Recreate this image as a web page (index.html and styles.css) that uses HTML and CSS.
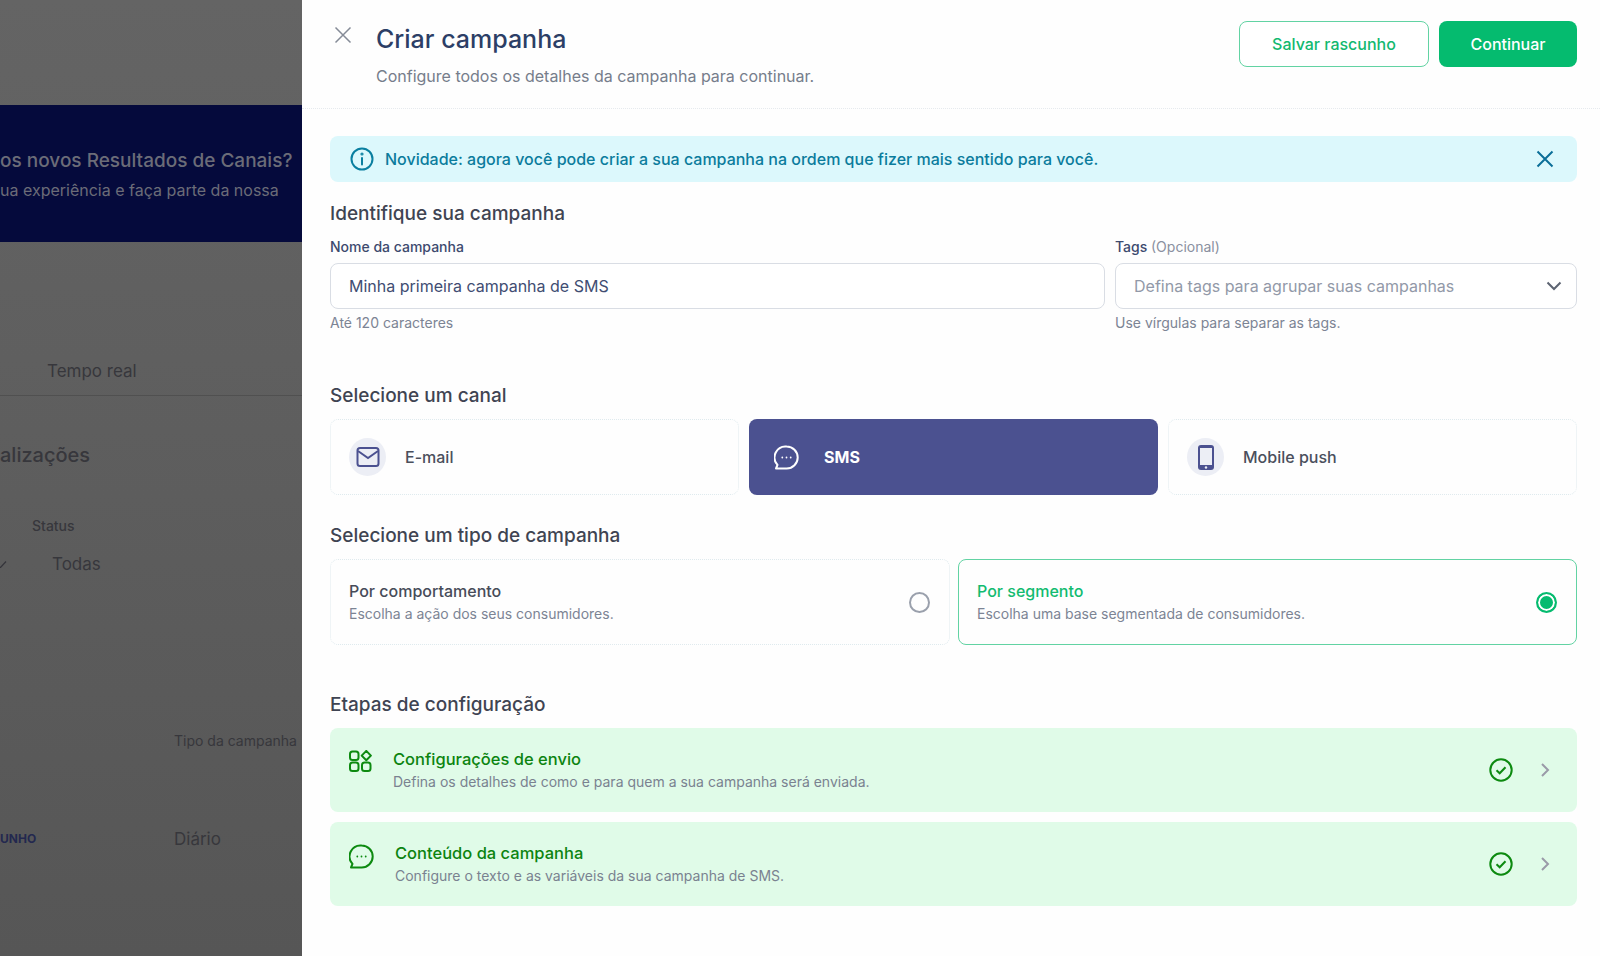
FILE: index.html
```html
<!DOCTYPE html>
<html lang="pt-BR">
<head>
<meta charset="utf-8">
<title>Criar campanha</title>
<link rel="stylesheet" href="styles.css">
</head>
<body>
<div class="app">
  <aside class="backdrop">
    <div class="bd-top"></div>
    <div class="bd-banner">
      <p class="bd-banner-title">os novos Resultados de Canais?</p>
      <p class="bd-banner-sub">ua experiência e faça parte da nossa</p>
    </div>
    <div class="bd-tabs"><span>Tempo real</span></div>
    <h2 class="bd-heading">alizações</h2>
    <div class="bd-status">Status</div>
    <div class="bd-filter">
      <svg class="bd-check" width="8" height="8" viewBox="0 0 8 8"><path d="M0 6.5 1.5 7.5 7 1.5" fill="none" stroke="#35353b" stroke-width="1.2"/></svg>
      <span>Todas</span>
    </div>
    <div class="bd-spacer"></div>
    <div class="bd-th">Tipo da campanha</div>
    <div class="bd-row"><b>UNHO</b><span>Diário</span></div>
  </aside>

  <main class="panel">
    <header class="head">
      <button class="close" aria-label="Fechar">
        <svg width="20" height="20" viewBox="0 0 20 20"><path d="M2.5 2.5 17.5 17.5M17.5 2.5 2.5 17.5" fill="none" stroke="#858b97" stroke-width="1.5"/></svg>
      </button>
      <div class="head-text">
        <h1>Criar campanha</h1>
        <p>Configure todos os detalhes da campanha para continuar.</p>
      </div>
      <div class="head-actions">
        <button class="btn btn-outline">Salvar rascunho</button>
        <button class="btn btn-solid">Continuar</button>
      </div>
    </header>

    <div class="body">
      <div class="alert">
        <svg width="24" height="24" viewBox="0 0 24 24" fill="none" stroke="#0a7fa0" stroke-width="2"><circle cx="12" cy="12" r="10.5"/><path d="M12 11v6.5" stroke-linecap="round"/><circle cx="12" cy="7" r=".6"/></svg>
        <span class="alert-text">Novidade: agora você pode criar a sua campanha na ordem que fizer mais sentido para você.</span>
        <svg class="alert-x" width="18" height="18" viewBox="0 0 18 18"><path d="M1.5 1.5 16.5 16.5M16.5 1.5 1.5 16.5" fill="none" stroke="#0b6f98" stroke-width="2"/></svg>
      </div>

      <section class="sec sec-id">
        <h3>Identifique sua campanha</h3>
        <div class="fields">
          <div class="field">
            <label>Nome da campanha</label>
            <div class="input value">Minha primeira campanha de SMS</div>
            <small>Até 120 caracteres</small>
          </div>
          <div class="field">
            <label>Tags <em>(Opcional)</em></label>
            <div class="input placeholder">
              <span>Defina tags para agrupar suas campanhas</span>
              <svg width="16" height="10" viewBox="0 0 16 10"><path d="M1.5 1.5 8 8l6.5-6.5" fill="none" stroke="#5d6472" stroke-width="2"/></svg>
            </div>
            <small>Use vírgulas para separar as tags.</small>
          </div>
        </div>
      </section>

      <section class="sec sec-canal">
        <h3>Selecione um canal</h3>
        <div class="channels">
          <div class="channel">
            <span class="avatar">
              <svg width="24" height="22" viewBox="0 0 24 22" fill="none" stroke="#4b5190" stroke-width="2"><rect x="1.5" y="2" width="21" height="18" rx="2.5"/><path d="M2 5l10 7 10-7"/></svg>
            </span>
            <span class="channel-name">E-mail</span>
          </div>
          <div class="channel active">
            <span class="avatar">
              <svg width="25" height="25" viewBox="0 0 25 25" fill="none" stroke="#fff" stroke-width="2"><path d="M12.7 1.5a11 11 0 0 1 0 22H2l1.5-3.6A11 11 0 0 1 12.7 1.5z" stroke-linejoin="round"/><path d="M8.3 12.5h.01M12.5 12.5h.01M16.7 12.5h.01" stroke-width="1.8" stroke-linecap="round"/></svg>
            </span>
            <span class="channel-name">SMS</span>
          </div>
          <div class="channel">
            <span class="avatar">
              <svg width="16" height="25" viewBox="0 0 16 25"><rect x="0" y="0" width="16" height="25" rx="3" fill="#4b5190"/><rect x="2" y="3" width="12" height="17" fill="#eceef5"/><circle cx="8" cy="22.5" r="1.2" fill="#eceef5"/></svg>
            </span>
            <span class="channel-name">Mobile push</span>
          </div>
        </div>
      </section>

      <section class="sec sec-tipo">
        <h3>Selecione um tipo de campanha</h3>
        <div class="types">
          <div class="type">
            <div><h4>Por comportamento</h4><p>Escolha a ação dos seus consumidores.</p></div>
            <span class="radio"></span>
          </div>
          <div class="type selected">
            <div><h4>Por segmento</h4><p>Escolha uma base segmentada de consumidores.</p></div>
            <span class="radio"></span>
          </div>
        </div>
      </section>

      <section class="sec sec-etapas">
        <h3>Etapas de configuração</h3>
        <div class="steps">
          <div class="step">
            <svg class="step-icon" width="23" height="22" viewBox="0 0 23 22" fill="none" stroke="#0d8a10" stroke-width="2"><rect x="1" y="1.5" width="8.5" height="8.5" rx="2.5"/><path d="M17.3.9l4.6 4.7-4.6 4.7-4.6-4.7z" stroke-linejoin="round"/><rect x="1" y="12.5" width="8.5" height="8.5" rx="2.5"/><rect x="13" y="12.5" width="8.5" height="8.5" rx="2.5"/></svg>
            <div class="step-text"><h4>Configurações de envio</h4><p>Defina os detalhes de como e para quem a sua campanha será enviada.</p></div>
            <svg width="24" height="24" viewBox="0 0 24 24" fill="none" stroke="#0d8a10" stroke-width="2"><circle cx="12" cy="12" r="10.7"/><path d="M7.5 12.3l3.2 3 5.8-6"/></svg>
            <svg class="chev" width="10" height="16" viewBox="0 0 10 16"><path d="M2 2l6 6-6 6" fill="none" stroke="#9a9aa8" stroke-width="2"/></svg>
          </div>
          <div class="step">
            <svg class="step-icon" width="25" height="25" viewBox="0 0 25 25" fill="none" stroke="#0d8a10" stroke-width="2"><path d="M12.7 1.5a11 11 0 0 1 0 22H2l1.5-3.6A11 11 0 0 1 12.7 1.5z" stroke-linejoin="round"/><path d="M8.3 12.5h.01M12.5 12.5h.01M16.7 12.5h.01" stroke-width="1.8" stroke-linecap="round"/></svg>
            <div class="step-text"><h4>Conteúdo da campanha</h4><p>Configure o texto e as variáveis da sua campanha de SMS.</p></div>
            <svg width="24" height="24" viewBox="0 0 24 24" fill="none" stroke="#0d8a10" stroke-width="2"><circle cx="12" cy="12" r="10.7"/><path d="M7.5 12.3l3.2 3 5.8-6"/></svg>
            <svg class="chev" width="10" height="16" viewBox="0 0 10 16"><path d="M2 2l6 6-6 6" fill="none" stroke="#9a9aa8" stroke-width="2"/></svg>
          </div>
        </div>
      </section>
    </div>
  </main>
</div>
</body>
</html>
```

FILE: styles.css
```css
* { box-sizing: border-box; }
html, body { margin: 0; height: 100%; }
body { font-family: Inter, "Open Sans", sans-serif; overflow: hidden; background: #fff; }
h1, h2, h3, h4, p { margin: 0; font-weight: inherit; }
button { font-family: inherit; background: none; border: 0; padding: 0; }

.app { display: flex; width: 1600px; height: 956px; overflow: hidden; }

/* dimmed page behind the drawer */
.backdrop { width: 302px; flex: none; height: 956px; overflow: hidden; background: linear-gradient(#646464, #5e5e5e 45%, #565656); color: #37373c; white-space: nowrap; }
.bd-top { height: 105px; }
.bd-banner { height: 137px; background: #050a3c; padding: 44px 0 0; color: #6b6c78; }
.bd-banner-title { font-size: 19px; font-weight: 500; line-height: 24px; }
.bd-banner-sub { font-size: 16px; line-height: 24px; margin-top: 5px; }
.bd-tabs { height: 154px; padding: 117px 0 0 47px; font-size: 17px; line-height: 24px; border-bottom: 1px solid #505050; }
.bd-heading { font-size: 20px; font-weight: 500; line-height: 28px; margin-top: 45px; }
.bd-status { font-size: 14px; font-weight: 500; line-height: 20px; margin: 47px 0 0 32px; }
.bd-filter { display: flex; align-items: center; gap: 45px; font-size: 17px; line-height: 24px; margin-top: 16px; }
.bd-check { flex: none; margin-left: -1px; }
.bd-spacer { height: 155px; }
.bd-th { font-size: 14px; line-height: 20px; margin-left: 174px; }
.bd-row { display: flex; align-items: center; margin-top: 76px; font-size: 17px; line-height: 24px; }
.bd-row b { width: 174px; font-size: 12px; font-weight: 700; color: #23284f; }

/* drawer */
.panel { flex: 1; min-width: 0; background: #fefefe; display: flex; flex-direction: column; }
.head { height: 109px; flex: none; display: flex; align-items: flex-start; padding: 21px 23px 0 0; border-bottom: 1px dotted #e6eaee; }
.close { width: 74px; flex: none; height: 28px; display: flex; justify-content: flex-end; padding: 4px 23px 0 0; }
.head-text { flex: 1; }
.head-text h1 { font-size: 25px; line-height: 36px; font-weight: 500; color: #2c3e66; }
.head-text p { font-size: 16px; line-height: 24px; margin-top: 7px; color: #767d8b; }
.head-actions { display: flex; gap: 10px; }
.btn { height: 46px; border-radius: 8px; font-size: 16px; font-weight: 500; }
.btn-outline { width: 190px; border: 1.5px solid #62d3a3; color: #12b96f; background: #fff; }
.btn-solid { width: 138px; background: #05bb6f; color: #fff; }

.body { padding: 27px 23px 0 28px; }
.alert { height: 46px; border-radius: 8px; background: #dcf8fc; display: flex; align-items: center; padding: 0 23px 0 20px; color: #0b7c9c; font-size: 16px; font-weight: 500; }
.alert-text { flex: 1; margin-left: 11px; }

.sec h3 { font-size: 19px; line-height: 24px; font-weight: 500; color: #3f4452; }
.sec-id { margin-top: 20px; }
.sec-canal { margin-top: 51px; }
.sec-tipo { margin-top: 29px; }
.sec-etapas { margin-top: 48px; }

.fields { display: grid; grid-template-columns: 775px 462px; gap: 10px; margin-top: 11px; }
.field label { display: block; font-size: 14px; line-height: 20px; font-weight: 500; color: #3d4a6e; }
.field label em { font-style: normal; font-weight: 400; color: #8a90a0; }
.input { height: 46px; margin-top: 6px; border: 1px solid #d9dde4; border-radius: 8px; padding: 0 14px 0 18px; display: flex; align-items: center; justify-content: space-between; font-size: 16px; background: #fff; }
.value { color: #414d72; }
.placeholder { color: #9299a8; }
.field small { display: block; font-size: 14px; line-height: 20px; margin-top: 4px; color: #7c8494; }

.channels { display: grid; grid-template-columns: repeat(3, 1fr); gap: 10px; margin-top: 11px; }
.channel { height: 76px; border: 1px dotted #dfeaee; border-radius: 8px; display: flex; align-items: center; padding-left: 18px; gap: 19px; font-size: 16px; font-weight: 500; color: #4a4f5c; }
.avatar { width: 37px; height: 38px; flex: none; border-radius: 50%; background: #eceef5; display: flex; align-items: center; justify-content: center; }
.channel.active { background: #4b5190; border-color: #4b5190; color: #fff; font-weight: 700; }
.channel.active .avatar { background: none; }

.types { display: grid; grid-template-columns: 620px 619px; gap: 8px; margin-top: 11px; }
.type { height: 86px; border: 1px dotted #dfeaee; border-radius: 8px; display: flex; align-items: center; justify-content: space-between; padding: 0 19px 0 18px; }
.type h4 { font-size: 16px; line-height: 22px; font-weight: 500; color: #474c59; }
.type p { font-size: 14px; line-height: 20px; margin-top: 2px; color: #7c8494; }
.radio { width: 21px; height: 21px; flex: none; border: 2px solid #9aa0ac; border-radius: 50%; }
.type.selected { border: 1.5px solid #62d3a3; }
.type.selected h4 { color: #12bb70; }
.type.selected .radio { border-color: #05bb6f; background: #05bb6f; box-shadow: inset 0 0 0 2px #fff; }

.steps { display: flex; flex-direction: column; gap: 10px; margin-top: 11px; }
.step { height: 84px; border-radius: 8px; background: #e0fbe8; display: flex; align-items: center; padding: 0 27px 0 19px; }
.step-icon { align-self: flex-start; margin-top: 22px; flex: none; }
.step-text { flex: 1; margin-left: 21px; }
.step h4 { font-size: 16.5px; line-height: 22px; font-weight: 500; color: #0c8410; }
.step p { font-size: 14px; line-height: 20px; margin-top: 2px; color: #7a8290; }
.chev { margin-left: 27px; flex: none; }
```
